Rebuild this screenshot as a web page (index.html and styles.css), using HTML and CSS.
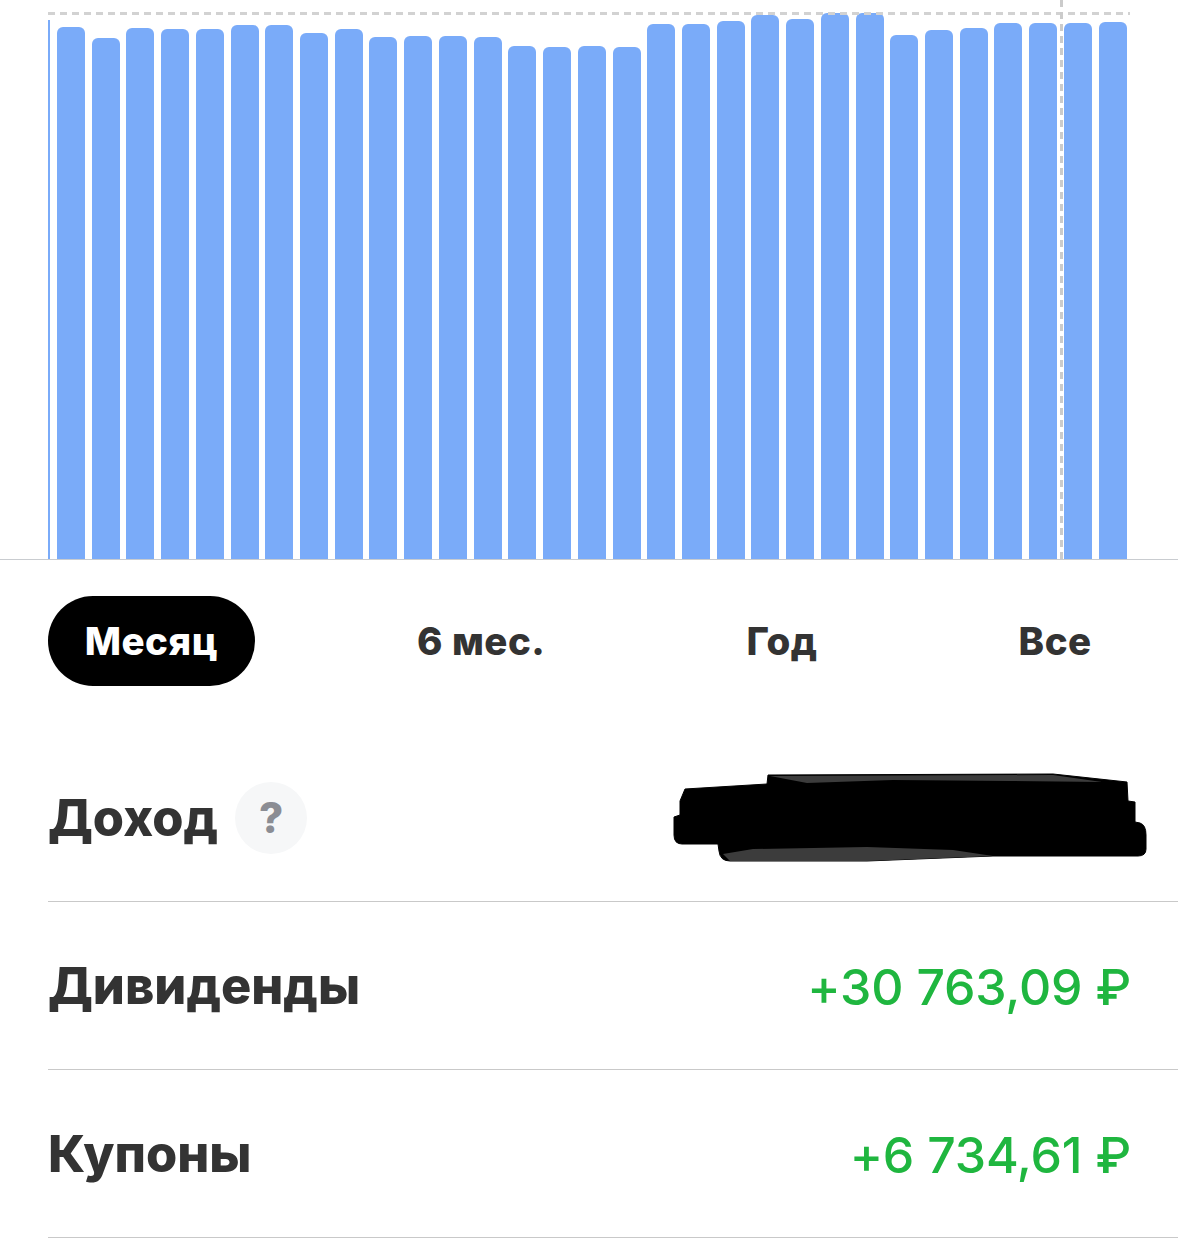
FILE: index.html
```html
<!DOCTYPE html>
<html lang="ru">
<head>
    <meta charset="UTF-8">
    <title>Доход</title>
    <link rel="stylesheet" href="styles.css">
</head>
<body>
    <div class="chart">
        <div class="chart-top-line"></div>
        <div class="chart-cursor"></div>
        <div class="bars">
            <div class="edge-bar"></div>
            <div class="bar" style="height: 532px"></div>
            <div class="bar" style="height: 521px"></div>
            <div class="bar" style="height: 531px"></div>
            <div class="bar" style="height: 530px"></div>
            <div class="bar" style="height: 530px"></div>
            <div class="bar" style="height: 534px"></div>
            <div class="bar" style="height: 534px"></div>
            <div class="bar" style="height: 526px"></div>
            <div class="bar" style="height: 530px"></div>
            <div class="bar" style="height: 522px"></div>
            <div class="bar" style="height: 523px"></div>
            <div class="bar" style="height: 523px"></div>
            <div class="bar" style="height: 522px"></div>
            <div class="bar" style="height: 513px"></div>
            <div class="bar" style="height: 512px"></div>
            <div class="bar" style="height: 513px"></div>
            <div class="bar" style="height: 512px"></div>
            <div class="bar" style="height: 535px"></div>
            <div class="bar" style="height: 535px"></div>
            <div class="bar" style="height: 538px"></div>
            <div class="bar" style="height: 544px"></div>
            <div class="bar" style="height: 540px"></div>
            <div class="bar" style="height: 546px"></div>
            <div class="bar" style="height: 546px"></div>
            <div class="bar" style="height: 524px"></div>
            <div class="bar" style="height: 529px"></div>
            <div class="bar" style="height: 531px"></div>
            <div class="bar" style="height: 536px"></div>
            <div class="bar" style="height: 536px"></div>
            <div class="bar" style="height: 536px"></div>
            <div class="bar" style="height: 537px"></div>
        </div>
    </div>

    <div class="tabs">
        <div class="tab tab-active">Месяц</div>
        <div class="tab tab-six">6 мес.</div>
        <div class="tab tab-year">Год</div>
        <div class="tab tab-all">Все</div>
    </div>

    <div class="rows">
        <div class="row">
            <div class="row-label">
                Доход
                <span class="help">?</span>
            </div>
            <svg class="scribble" width="476" height="90" viewBox="0 0 476 90">
                <path d="M96 2 L381 1 L455 9 L456 28 L463 29 L463 49 L468 50 Q474 52 474 62 L474 76 Q474 83 466 83 L321 83 L195 88 L58 88 Q48 88 47 78 L46 71 L10 71 Q2 71 2 62 L2 44 L8 42 L8 28 L13 16 L95 11 Z" fill="#000" stroke="#000" stroke-width="1" stroke-linejoin="round"/>
                <path class="scribble-shade" d="M51 81 L81 76 L195 74 L281 77 L321 83 L195 88 L58 88 Z"/>
                <path class="scribble-shade" d="M98 3 L135 10 L221 7 L338 8 L430 9 L381 2 Z"/>
            </svg>
        </div>
        <div class="row">
            <div class="row-label">Дивиденды</div>
            <div class="row-value">+30 763,09 ₽</div>
        </div>
        <div class="row">
            <div class="row-label">Купоны</div>
            <div class="row-value">+6 734,61 ₽</div>
        </div>
    </div>
</body>
</html>
```

FILE: styles.css
```css
body {
    margin: 0;
    background: #fff;
    font-family: Inter, "Liberation Sans", Arial, sans-serif;
    color: #333;
}
.chart {
    position: relative;
    height: 559px;
    border-bottom: 1px solid #c9ccd0;
}
.chart-top-line {
    position: absolute;
    top: 12px;
    left: 48px;
    width: 1082px;
    height: 3px;
    background: repeating-linear-gradient(90deg, #d2d2d2 0 7px, transparent 7px 12px);
}
.chart-cursor {
    position: absolute;
    top: 0;
    bottom: 0;
    left: 1060px;
    width: 3px;
    background: repeating-linear-gradient(180deg, #cbcbcb 0 7px, transparent 7px 12px);
    z-index: 1;
}
.bars {
    display: flex;
    align-items: flex-end;
    height: 100%;
    padding-left: 48px;
}
.edge-bar {
    width: 2px;
    height: 539px;
    margin-right: 7px;
    background: #7aabf9;
}
.bar {
    width: 28px;
    margin-right: 6.73px;
    background: #7aabf9;
    border-radius: 6px 6px 0 0;
}
.tabs {
    display: flex;
    align-items: center;
    height: 90px;
    margin-top: 36px;
    padding-left: 48px;
    font-size: 38.5px;
    font-weight: 800;
    letter-spacing: 0.5px;
}
.tab-active {
    display: flex;
    align-items: center;
    justify-content: center;
    width: 207px;
    height: 90px;
    border-radius: 45px;
    background: #000;
    color: #fff;
}
.tab-six {
    margin-left: 162px;
}
.tab-year {
    margin-left: 201px;
}
.tab-all {
    margin-left: 201px;
}
.rows {
    margin-top: 48px;
    margin-left: 48px;
}
.row {
    display: flex;
    align-items: center;
    justify-content: space-between;
    height: 167px;
    padding-right: 47px;
    border-bottom: 1px solid #c9c9c9;
}
.row-label {
    display: flex;
    align-items: center;
    font-size: 50.5px;
    font-weight: 800;
}
.help {
    display: flex;
    align-items: center;
    justify-content: center;
    width: 72px;
    height: 72px;
    margin-left: 17px;
    border-radius: 50%;
    background: #f6f7f8;
    color: #8b8d94;
    font-size: 42px;
}
.scribble {
    margin-right: -17px;
    filter: blur(0.7px);
}
.scribble-shade {
    fill: #3c3c3c;
}
.row-value {
    padding-top: 3px;
    color: #1fb63f;
    font-size: 50px;
    font-weight: 500;
    letter-spacing: -0.2px;
}
```
